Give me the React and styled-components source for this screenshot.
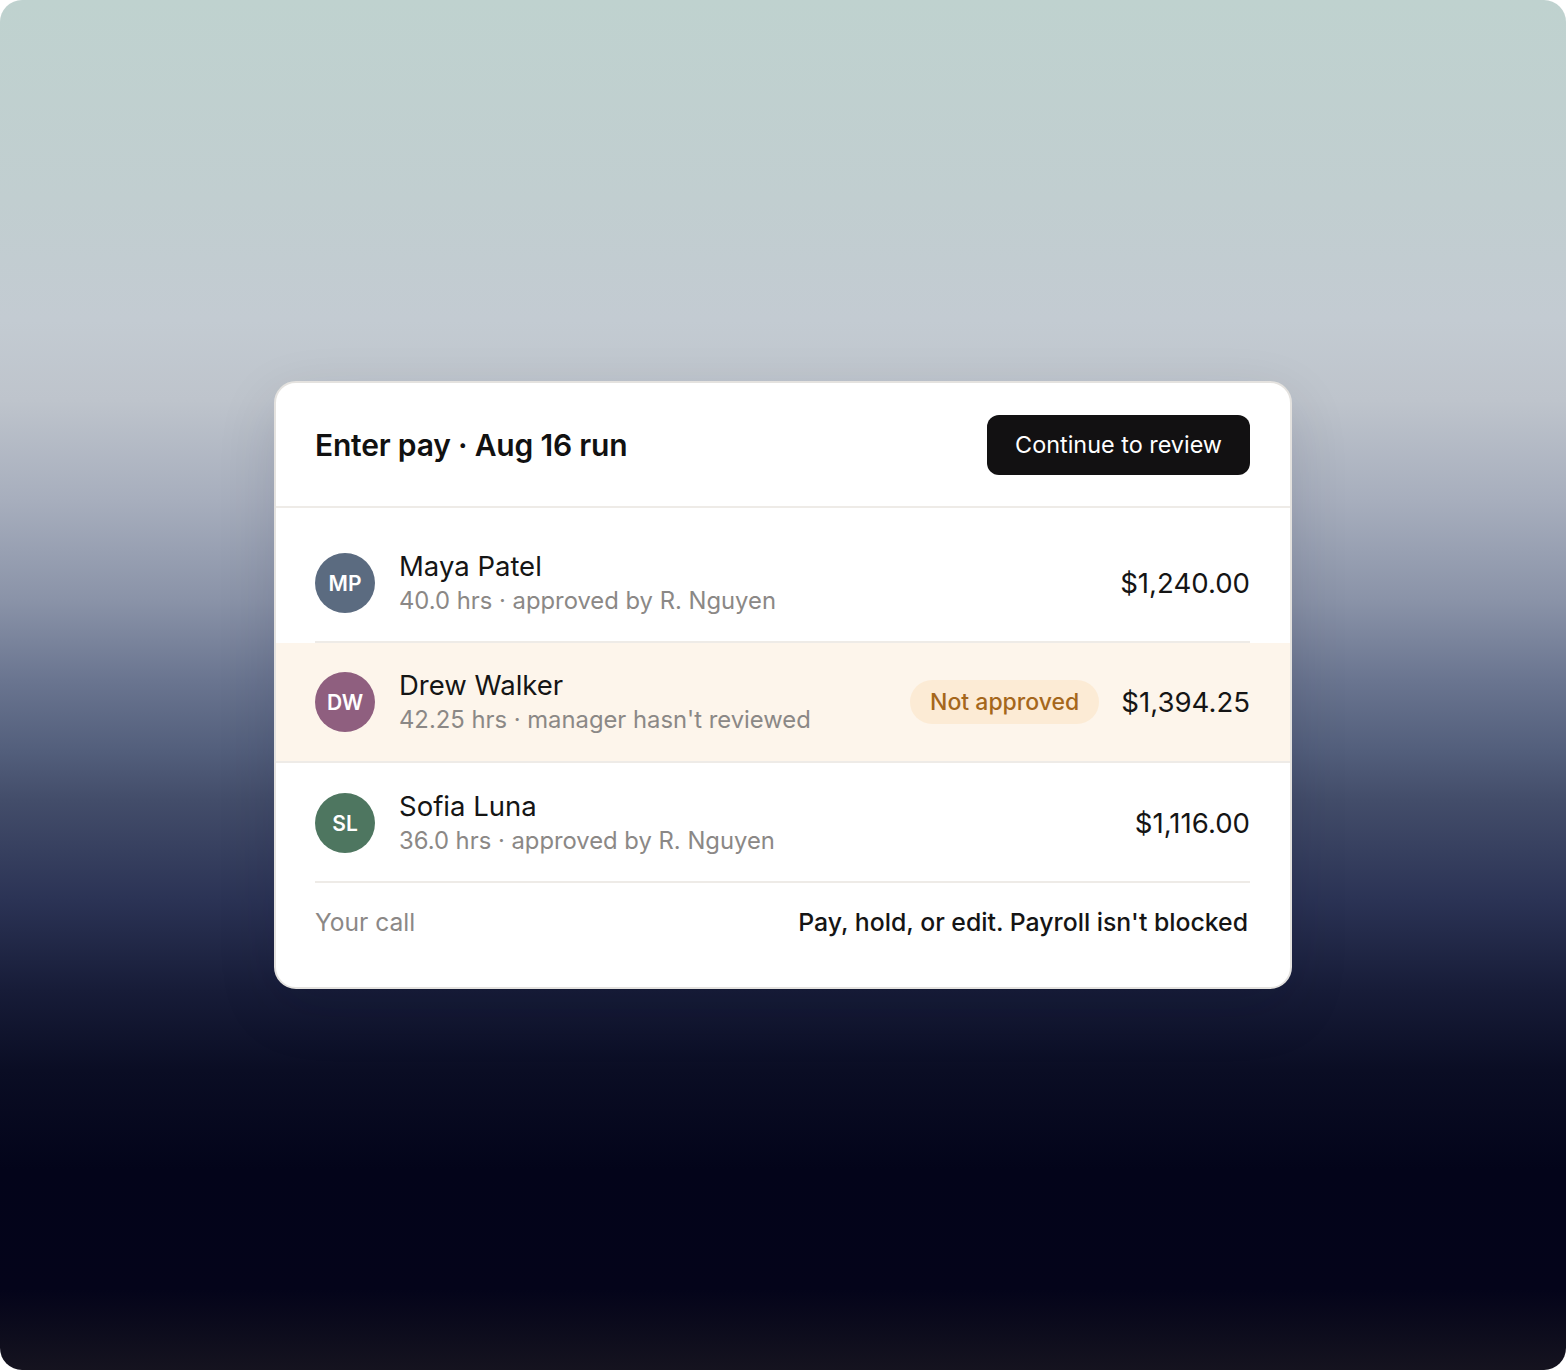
import React from "react";
import styled, { createGlobalStyle } from "styled-components";

const Global = createGlobalStyle`
  html, body { margin: 0; padding: 0; background: #ffffff; }
  body { font-family: Inter, "Noto Sans", "Liberation Sans", sans-serif; -webkit-font-smoothing: antialiased; }
  * { box-sizing: border-box; }
`;

const Stage = styled.div`
  width: 1566px;
  height: 1370px;
  border-radius: 22px;
  overflow: hidden;
  display: flex;
  align-items: center;
  justify-content: center;
  background: linear-gradient(
    180deg,
    #bfd2cf 0px,
    #c1ced0 200px,
    #c3cbd2 320px,
    #bec4cc 400px,
    #a7aebd 500px,
    #8a93a8 600px,
    #6a7590 680px,
    #535f7c 750px,
    #434d6a 800px,
    #2b3355 900px,
    #171c38 990px,
    #0a0d24 1070px,
    #03041a 1170px,
    #04041a 1290px,
    #15131f 1370px
  );
`;

const Card = styled.section`
  width: 1018px;
  background: #ffffff;
  border: 2px solid #e4e2df;
  border-radius: 22px;
  overflow: hidden;
  box-shadow: 0 20px 60px rgba(10, 15, 40, 0.12);
`;

const Header = styled.header`
  display: flex;
  align-items: center;
  justify-content: space-between;
  height: 125px;
  padding: 0 40px 0 39px;
  border-bottom: 2px solid #eeebe7;
`;

const Title = styled.h1`
  margin: 0;
  font-size: 30px;
  font-weight: 600;
  color: #111111;
  letter-spacing: -0.2px;
`;

const PrimaryButton = styled.button`
  height: 60px;
  padding: 0 28px;
  border: none;
  border-radius: 12px;
  background: #121112;
  color: #ffffff;
  font-family: inherit;
  font-size: 23.4px;
  font-weight: 400;
  cursor: pointer;
`;

const List = styled.div`
  padding-top: 15px;
`;

const Row = styled.div`
  display: flex;
  align-items: center;
  height: 120px;
  padding: 0 40px 0 39px;
  background: ${(p) => (p.$flagged ? "#fdf5eb" : "transparent")};
  border-bottom: ${(p) => (p.$flagged ? "2px solid #eeebe7" : "none")};
  position: relative;
  ${(p) =>
    p.$divider &&
    `
    &::after {
      content: "";
      position: absolute;
      left: 39px;
      right: 40px;
      bottom: 0;
      height: 2px;
      background: #eeebe7;
    }
  `}
`;

const Avatar = styled.div`
  width: 60px;
  height: 60px;
  border-radius: 50%;
  flex: none;
  display: flex;
  align-items: center;
  justify-content: center;
  background: ${(p) => p.$color};
  color: #ffffff;
  font-size: 21px;
  font-weight: 600;
`;

const Info = styled.div`
  flex: 1;
  display: flex;
  flex-direction: column;
  gap: 3px;
  margin-left: 24px;
  min-width: 0;
`;

const Name = styled.div`
  font-size: 27.5px;
  font-weight: 400;
  color: #151515;
  line-height: 33px;
`;

const Meta = styled.div`
  font-size: 23.8px;
  color: #8b8886;
  line-height: 30px;
`;

const Badge = styled.span`
  display: inline-flex;
  align-items: center;
  height: 44px;
  padding: 0 20px;
  border-radius: 22px;
  background: #fcebd5;
  color: #a5671c;
  font-size: 23px;
  font-weight: 500;
  margin-right: 22px;
`;

const Amount = styled.div`
  font-size: 27.6px;
  font-weight: 400;
  color: #151515;
`;

const Footer = styled.footer`
  display: flex;
  align-items: center;
  justify-content: space-between;
  height: 104px;
  padding: 0 42px 26px 39px;
`;

const FootLabel = styled.span`
  font-size: 24.6px;
  color: #8b8886;
`;

const FootNote = styled.span`
  font-size: 24.8px;
  font-weight: 500;
  color: #151515;
`;

const people = [
  { initials: "MP", color: "#5b6b80", name: "Maya Patel", meta: "40.0 hrs · approved by R. Nguyen", amount: "$1,240.00", divider: true },
  { initials: "DW", color: "#8f5f7f", name: "Drew Walker", meta: "42.25 hrs · manager hasn't reviewed", amount: "$1,394.25", flagged: true },
  { initials: "SL", color: "#4e7660", name: "Sofia Luna", meta: "36.0 hrs · approved by R. Nguyen", amount: "$1,116.00", divider: true },
];

export default function App() {
  return (
    <>
      <Global />
      <Stage>
        <Card>
          <Header>
            <Title>Enter pay · Aug 16 run</Title>
            <PrimaryButton>Continue to review</PrimaryButton>
          </Header>
          <List>
            {people.map((p) => (
              <Row key={p.initials} $flagged={p.flagged} $divider={p.divider}>
                <Avatar $color={p.color}>{p.initials}</Avatar>
                <Info>
                  <Name>{p.name}</Name>
                  <Meta>{p.meta}</Meta>
                </Info>
                {p.flagged && <Badge>Not approved</Badge>}
                <Amount>{p.amount}</Amount>
              </Row>
            ))}
          </List>
          <Footer>
            <FootLabel>Your call</FootLabel>
            <FootNote>Pay, hold, or edit. Payroll isn't blocked</FootNote>
          </Footer>
        </Card>
      </Stage>
    </>
  );
}
